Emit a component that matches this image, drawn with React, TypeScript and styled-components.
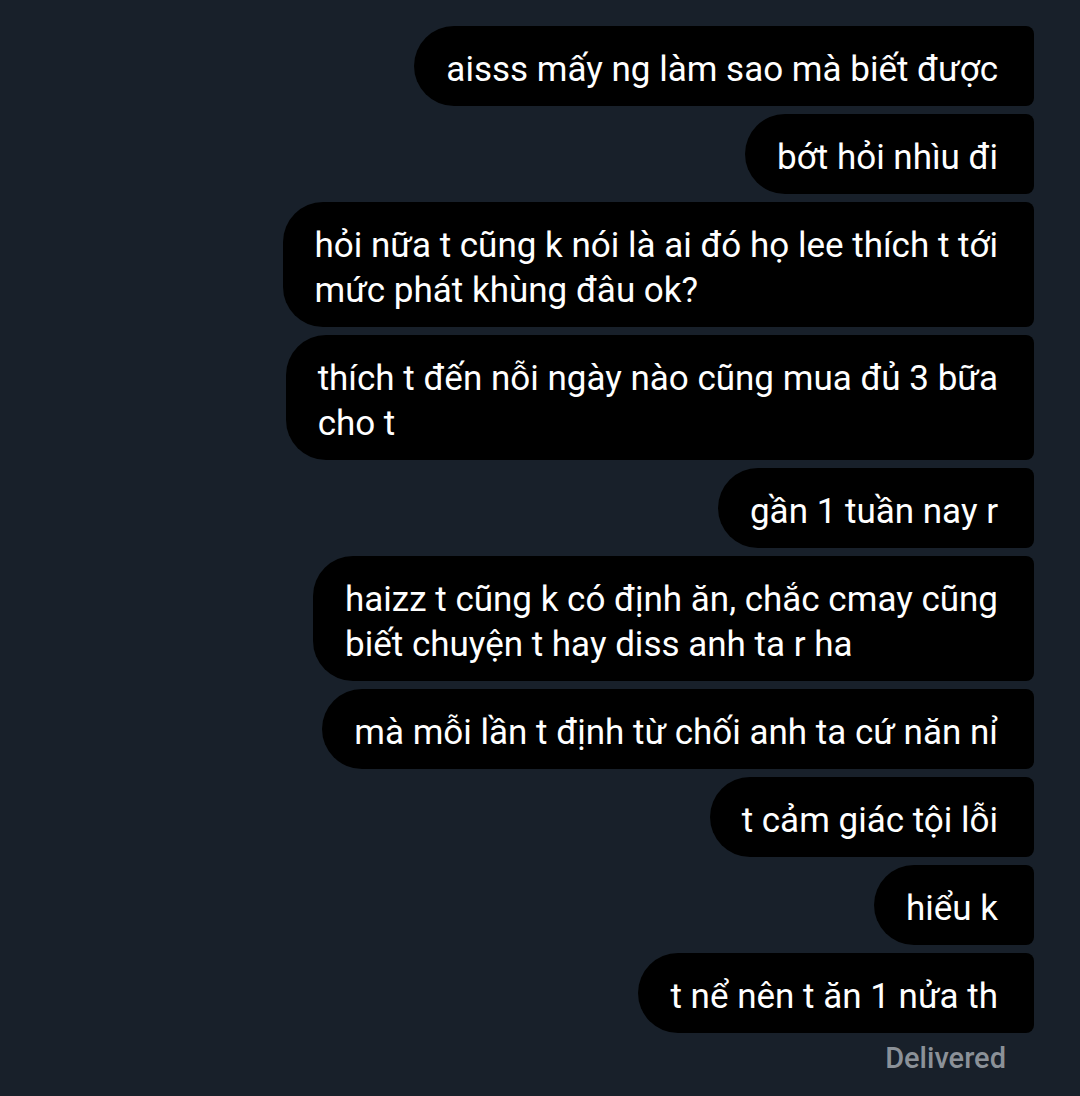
import React from 'react';
import styled, { createGlobalStyle } from 'styled-components';

const GlobalStyle = createGlobalStyle`
    html, body {
        margin: 0;
        padding: 0;
        background: #18202a;
    }
    body {
        font-family: Roboto, 'Noto Sans', sans-serif;
        -webkit-font-smoothing: antialiased;
    }
`;

const Screen = styled.div`
    width: 1080px;
    height: 1096px;
    box-sizing: border-box;
    padding: 26px 46px 0 0;
    background: #18202a;
    display: flex;
    flex-direction: column;
    align-items: flex-end;
    overflow: hidden;
`;

const Thread = styled.div`
    display: flex;
    flex-direction: column;
    align-items: flex-end;
    gap: 8px;
`;

const Bubble = styled.div`
    background: #000;
    color: #fff;
    font-size: 35px;
    line-height: 45px;
    padding: 21px 36px 14px 32px;
    border-radius: 40px 8px 8px 40px;
    white-space: nowrap;
`;

const Status = styled.div`
    margin-top: 8px;
    margin-right: 28px;
    color: #8b9198;
    font-size: 29px;
    font-weight: 500;
    line-height: 34px;
`;

const messages: string[][] = [
    ['aisss mấy ng làm sao mà biết được'],
    ['bớt hỏi nhìu đi'],
    ['hỏi nữa t cũng k nói là ai đó họ lee thích t tới', 'mức phát khùng đâu ok?'],
    ['thích t đến nỗi ngày nào cũng mua đủ 3 bữa', 'cho t'],
    ['gần 1 tuần nay r'],
    ['haizz t cũng k có định ăn, chắc cmay cũng', 'biết chuyện t hay diss anh ta r ha'],
    ['mà mỗi lần t định từ chối anh ta cứ năn nỉ'],
    ['t cảm giác tội lỗi'],
    ['hiểu k'],
    ['t nể nên t ăn 1 nửa th'],
];

export default function App() {
    return (
        <>
            <GlobalStyle />
            <Screen>
                <Thread>
                    {messages.map((lines, i) => (
                        <Bubble key={i}>
                            {lines.map((l, j) => (
                                <React.Fragment key={j}>
                                    {j > 0 && <br />}
                                    {l}
                                </React.Fragment>
                            ))}
                        </Bubble>
                    ))}
                </Thread>
                <Status>Delivered</Status>
            </Screen>
        </>
    );
}
